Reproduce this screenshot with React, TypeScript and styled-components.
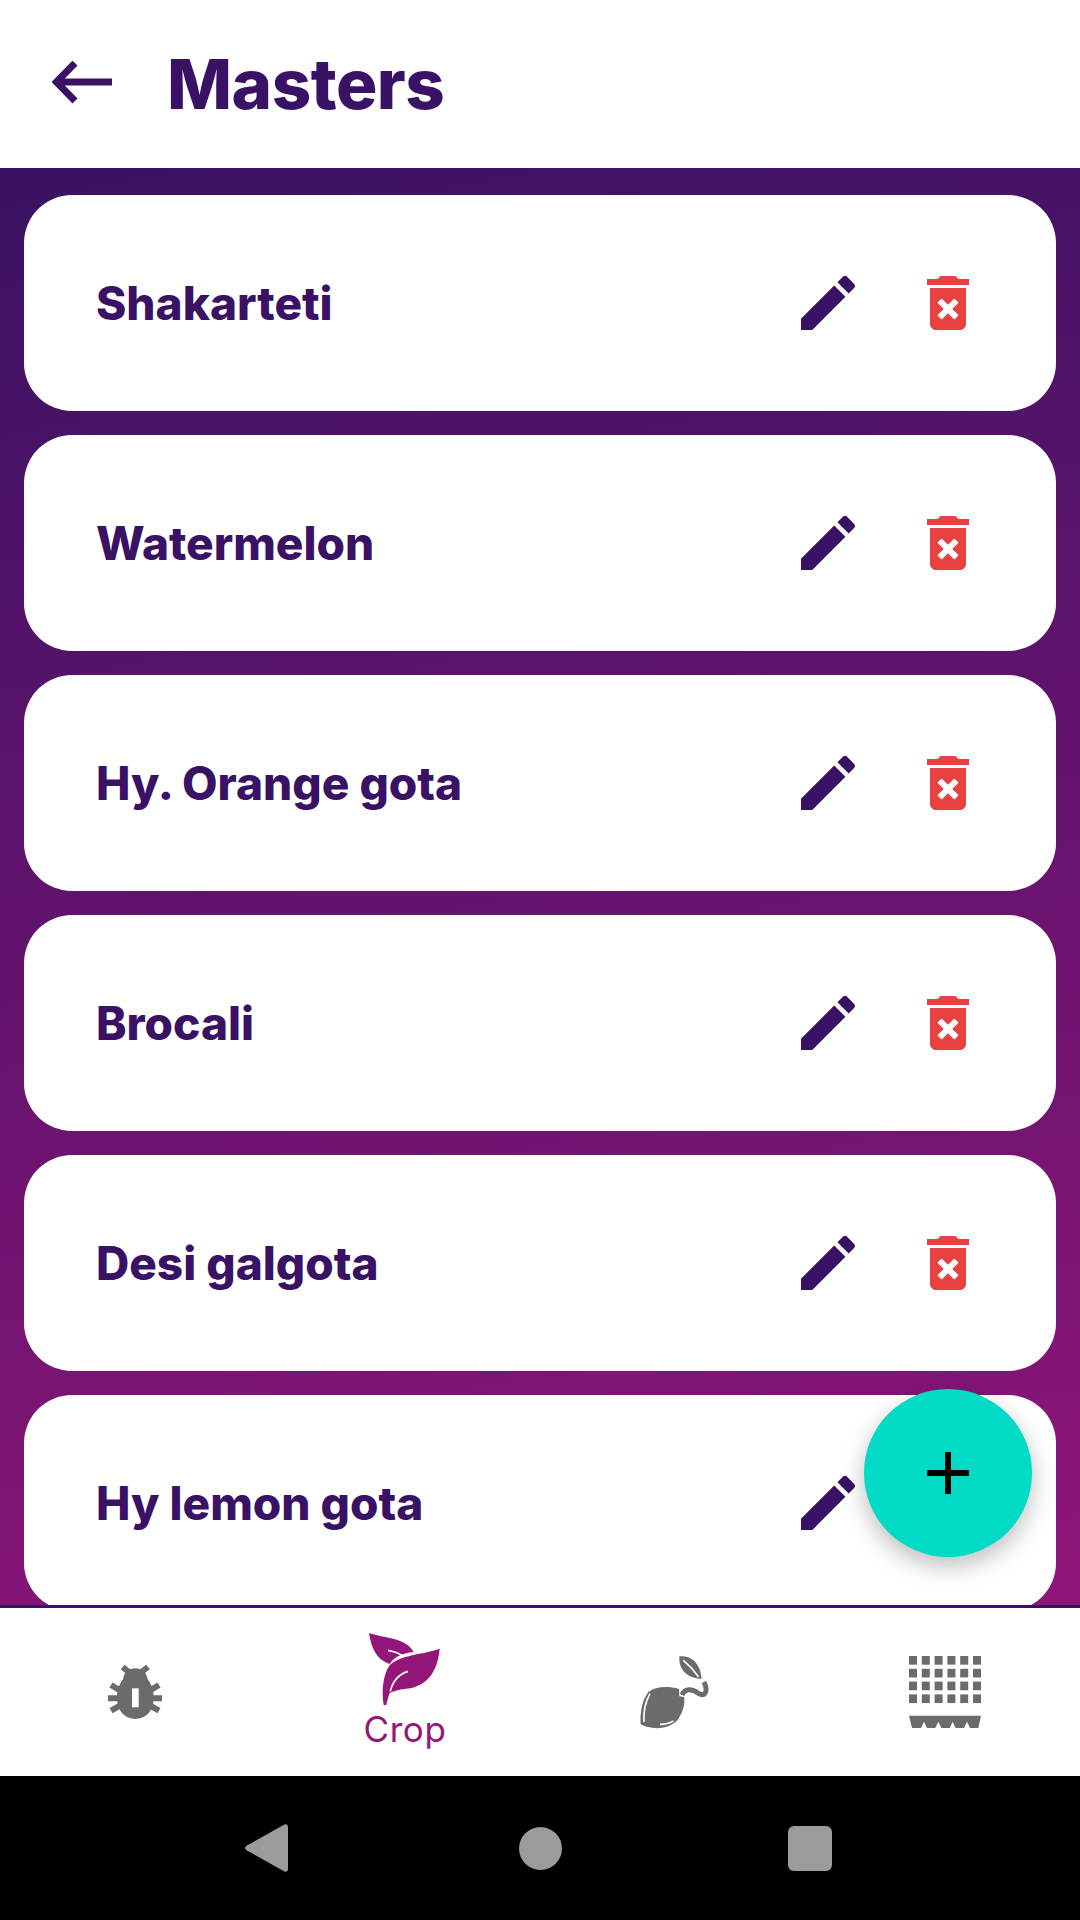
import styled, { createGlobalStyle } from "styled-components";

const INK = "#3a1265";
const MAGENTA = "#951679";
const GREY = "#6b6b6b";

const crops = ["Shakarteti", "Watermelon", "Hy. Orange gota", "Brocali", "Desi galgota", "Hy lemon gota"];

const GlobalStyle = createGlobalStyle`
  html, body {
    margin: 0;
    padding: 0;
    background: #fff;
  }
  * {
    box-sizing: border-box;
  }
`;

const Screen = styled.div`
  width: 1080px;
  height: 1920px;
  display: flex;
  flex-direction: column;
  font-family: Inter, "Liberation Sans", sans-serif;
  overflow: hidden;
`;

const Header = styled.header`
  height: 168px;
  flex: none;
  display: flex;
  align-items: center;
  gap: 52px;
  padding-left: 52px;
  background: #fff;
`;

const BackIcon = styled.svg`
  width: 63px;
  height: 46px;
  flex: none;
`;

const Title = styled.h1`
  margin: 0;
  font-size: 69px;
  font-weight: 800;
  letter-spacing: -0.5px;
  color: ${INK};
`;

const Main = styled.main`
  flex: 1;
  position: relative;
  overflow: hidden;
  background: linear-gradient(168deg, #3a1262 0%, #8f1579 100%);
`;

const List = styled.div`
  display: flex;
  flex-direction: column;
  gap: 24px;
  padding: 27px 24px 0;
`;

const Card = styled.div`
  height: 216px;
  flex: none;
  display: flex;
  align-items: center;
  gap: 48px;
  padding: 0 72px;
  border-radius: 48px;
  background: #fff;
`;

const CardName = styled.span`
  flex: 1;
  font-size: 46px;
  font-weight: 800;
  color: ${INK};
`;

const ActionIcon = styled.svg<{ $color: string }>`
  width: 72px;
  height: 72px;
  flex: none;
  fill: ${(p) => p.$color};
`;

const Fab = styled.button`
  position: absolute;
  right: 48px;
  bottom: 48px;
  width: 168px;
  height: 168px;
  padding: 0;
  border: 0;
  border-radius: 50%;
  display: flex;
  align-items: center;
  justify-content: center;
  background: #01dbc5;
  box-shadow: 0 9px 24px rgba(0, 0, 0, 0.26);
`;

const BottomNav = styled.nav`
  height: 171px;
  flex: none;
  display: grid;
  grid-template-columns: repeat(4, 1fr);
  align-items: center;
  justify-items: center;
  border-top: 3px solid ${INK};
  background: #fff;
`;

const Tab = styled.div`
  display: flex;
  flex-direction: column;
  align-items: center;
`;

const TabLabel = styled.span`
  font-size: 35px;
  line-height: 44px;
  margin-top: 2px;
  letter-spacing: 0.6px;
  color: ${MAGENTA};
`;

const SystemBar = styled.div`
  height: 144px;
  flex: none;
  display: grid;
  grid-template-columns: 274px 269px 44px;
  align-items: center;
  padding-left: 245px;
  background: #000;
`;

const HomeDot = styled.div`
  width: 43px;
  height: 43px;
  border-radius: 50%;
  background: #9b9b9b;
`;

const RecentsSquare = styled.div`
  width: 44px;
  height: 45px;
  border-radius: 6px;
  background: #9b9b9b;
`;

function EditIcon() {
  return (
    <ActionIcon $color={INK} viewBox="0 0 24 24">
      <path d="M3 17.25V21h3.75L17.81 9.94l-3.75-3.75L3 17.25zM20.71 7.04c.39-.39.39-1.02 0-1.41l-2.34-2.34a.9959.9959 0 0 0-1.41 0l-1.83 1.83 3.75 3.75 1.83-1.83z" />
    </ActionIcon>
  );
}

function DeleteIcon() {
  return (
    <ActionIcon $color="#e84142" viewBox="0 0 24 24">
      <path d="M6 19c0 1.1.9 2 2 2h8c1.1 0 2-.9 2-2V7H6v12zm2.46-7.12l1.41-1.41L12 12.59l2.12-2.12 1.41 1.41L13.41 14l2.12 2.12-1.41 1.41L12 15.41l-2.12 2.12-1.41-1.41L10.59 14l-2.13-2.12zM15.5 4l-1-1h-5l-1 1H5v2h14V4z" />
    </ActionIcon>
  );
}

function BugIcon() {
  return (
    <svg width="54" height="54" viewBox="143 225 162 162">
      <g stroke={GREY} strokeWidth="18" fill="none">
        <path d="M143 325H305" />
        <path d="M152 285L195 311M296 285L253 311" />
        <path d="M152 362L195 338M296 362L253 338" />
        <path d="M187 231L212 252M263 231L236 252" />
      </g>
      <path
        d="M225 235C245 235 258 245 262 268C275 285 281 305 280 328C278 365 255 387 225 387C195 387 172 365 170 328C169 305 175 285 188 268C192 245 205 235 225 235Z"
        fill={GREY}
      />
      <rect x="215" y="295" width="20" height="57" fill="#fff" />
    </svg>
  );
}

function LeafIcon() {
  return (
    <svg width="71" height="72" viewBox="928 125 213 216" fill={MAGENTA}>
      <path d="M928 125C980 142 1040 140 1062 182C1030 185 1005 195 990 218C950 205 935 170 928 125Z" />
      <path d="M1140 172C1135 230 1110 285 1040 292C1015 295 1000 300 990 305C985 320 982 330 980 341H972C965 300 970 250 990 222C1020 190 1090 190 1140 172Z" />
      <path d="M992 300C1000 265 1020 248 1045 240" stroke="#fff" strokeWidth="5" fill="none" />
      <path d="M985 177C1000 179 1015 184 1030 193" stroke="#fff" strokeWidth="5" fill="none" />
    </svg>
  );
}

function SeedlingIcon() {
  return (
    <svg width="70" height="73" viewBox="120 197 210 219" fill={GREY}>
      <path d="M237 296C200 285 165 290 145 305C125 330 120 370 122 402C150 418 200 420 230 392C250 368 256 338 252 320L238 318Z" />
      <path d="M150 310C136 335 130 365 132 395M180 402C195 402 210 398 220 392" stroke="#fff" strokeWidth="5" fill="none" />
      <path d="M246 314C256 290 280 298 295 309C314 320 326 305 312 275" stroke={GREY} strokeWidth="15" fill="none" />
      <path d="M238 198C272 195 300 215 305 265C270 265 235 245 238 198Z" />
      <path d="M250 210C268 225 282 240 296 260" stroke="#fff" strokeWidth="5" fill="none" />
    </svg>
  );
}

function SeedTrayIcon() {
  const cols = [0, 1, 2, 3, 4, 5];
  const rows = [0, 1, 2, 3];
  return (
    <svg width="72" height="72" viewBox="0 0 216 216" fill={GREY}>
      {rows.map((r) =>
        cols.map((c) => <rect key={`${r}-${c}`} x={c * 38.4} y={r * 38.4} width="24" height="26" />),
      )}
      <path d="M0 179H216L208 216H183L174 197L165 216H140L131 197L122 216H97L88 197L79 216H54L45 197L36 216H9Z" />
    </svg>
  );
}

export default function App() {
  return (
    <Screen>
      <GlobalStyle />
      <Header>
        <BackIcon viewBox="0 0 63 46" fill="none" stroke={INK} strokeWidth="7">
          <path d="M60 21H5" />
          <path d="M23 2L4.500 21 23 40" />
        </BackIcon>
        <Title>Masters</Title>
      </Header>
      <Main>
        <List>
          {crops.map((name, i) => (
            <Card key={name}>
              <CardName>{name}</CardName>
              <EditIcon />
              {i < 5 ? <DeleteIcon /> : <ActionIcon $color="#e84142" viewBox="0 0 24 24" />}
            </Card>
          ))}
        </List>
        <Fab aria-label="Add">
          <svg width="72" height="72" viewBox="0 0 24 24" fill="#000">
            <path d="M19 13h-6v6h-2v-6H5v-2h6V5h2v6h6v2z" />
          </svg>
        </Fab>
      </Main>
      <BottomNav>
        <Tab>
          <BugIcon />
        </Tab>
        <Tab>
          <LeafIcon />
          <TabLabel>Crop</TabLabel>
        </Tab>
        <Tab>
          <SeedlingIcon />
        </Tab>
        <Tab>
          <SeedTrayIcon />
        </Tab>
      </BottomNav>
      <SystemBar>
        <svg width="43" height="48" viewBox="0 0 43 48" fill="#9b9b9b">
          <path d="M39 0.800C41 -0.600 43 0.500 43 3V45C43 47.500 41 48.600 39 47.200L2 26.500C-0.500 25 -0.500 23 2 21.500Z" />
        </svg>
        <HomeDot />
        <RecentsSquare />
      </SystemBar>
    </Screen>
  );
}
